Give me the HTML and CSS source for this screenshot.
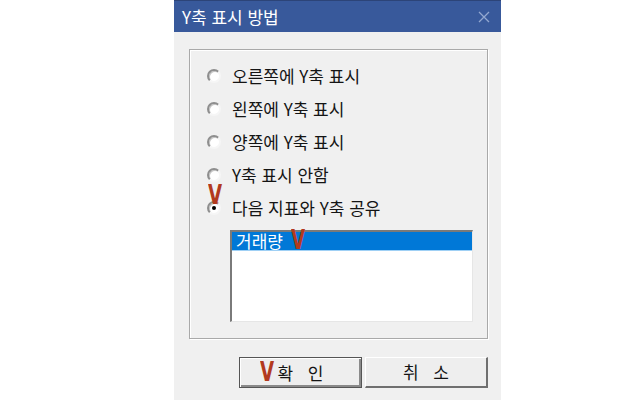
FILE: index.html
```html
<!DOCTYPE html>
<html lang="ko">
<head>
<meta charset="utf-8">
<link rel="stylesheet" href="styles.css">
</head>
<body>
<div class="dialog">
  <div class="titlebar">
    <span class="title">Y축 표시 방법</span>
    <svg class="close" width="12" height="12" viewBox="0 0 12 12"><path d="M1 1L11 11M11 1L1 11" stroke="#93a8d0" stroke-width="1.3" fill="none"/></svg>
  </div>
  <div class="content">
    <div class="group">
      <div class="options">
        <div class="opt"><span class="radio"></span><span class="lbl">오른쪽에 Y축 표시</span></div>
        <div class="opt"><span class="radio"></span><span class="lbl">왼쪽에 Y축 표시</span></div>
        <div class="opt"><span class="radio"></span><span class="lbl">양쪽에 Y축 표시</span></div>
        <div class="opt"><span class="radio"></span><span class="lbl">Y축 표시 안함</span></div>
        <div class="opt"><span class="radio checked"></span><span class="lbl">다음 지표와 Y축 공유</span></div>
      </div>
      <div class="listbox">
        <div class="item sel">거래량</div>
      </div>
    </div>
    <div class="buttons">
      <button class="btn default">확 인</button>
      <button class="btn">취 소</button>
    </div>
  </div>
  <span class="mark mark-radio">V</span>
  <span class="mark mark-list">V</span>
  <span class="mark mark-ok">V</span>
</div>
</body>
</html>
```
FILE: styles.css
```css
html, body {
  margin: 0;
  padding: 0;
  background: #ffffff;
}
body {
  font-family: "Noto Sans CJK KR", "Noto Sans", sans-serif;
  font-size: 17px;
  color: #141414;
}
.dialog {
  position: relative;
  margin-left: 174px;
  width: 327px;
  height: 400px;
  background: #f0f0f0;
  overflow: hidden;
}
.titlebar {
  height: 32px;
  background: #38599b;
  border-top: 1px solid #2c4478;
  box-sizing: border-box;
  display: flex;
  align-items: center;
  justify-content: space-between;
  padding: 0 11px 0 8px;
}
.title {
  color: #ffffff;
  font-size: 17px;
  line-height: 20px;
}
.close {
  display: block;
}
.content {
  display: flex;
  flex-direction: column;
}
.group {
  margin: 17px 13px 0 15px;
  height: 290px;
  box-sizing: border-box;
  border: 1px solid #a9a9a9;
  box-shadow: inset 1px 1px 0 #ffffff, 1px 1px 0 #ffffff;
}
.options {
  display: flex;
  flex-direction: column;
  padding: 9px 0 0 17px;
}
.opt {
  height: 33px;
  display: flex;
  align-items: center;
  gap: 11px;
}
.lbl {
  line-height: 20px;
}
.radio {
  position: relative;
  width: 14px;
  height: 14px;
  box-sizing: border-box;
  border-radius: 50%;
  background: #ffffff;
  border: 2px solid;
  border-color: #8e8e8e #f6f6f6 #f6f6f6 #8e8e8e;
  box-shadow: inset 1px 1px 0 #c4c4c4;
}
.radio.checked::after {
  content: "";
  position: absolute;
  left: 3px;
  top: 3px;
  width: 4px;
  height: 4px;
  border-radius: 50%;
  background: #000000;
}
.listbox {
  margin: 6px 0 0 40px;
  width: 243px;
  height: 92px;
  box-sizing: border-box;
  background: #ffffff;
  border-style: solid;
  border-width: 2px 1px 1px 2px;
  border-color: #7a7a7a #e6e6e6 #e6e6e6 #7a7a7a;
}
.item {
  height: 18px;
  line-height: 18px;
  padding-left: 4px;
}
.item.sel {
  background: #0078d7;
  color: #ffffff;
  border-bottom: 1px solid #9fd0f5;
}
.buttons {
  display: flex;
  justify-content: flex-end;
  gap: 3px;
  margin: 18px 13px 0 0;
}
.btn {
  width: 123px;
  height: 31px;
  box-sizing: border-box;
  font-family: "Noto Sans CJK KR", "Noto Sans", sans-serif;
  font-size: 17px;
  line-height: 20px;
  color: #141414;
  word-spacing: 10px;
  background: #eeeeee;
  padding: 0;
  border-style: solid;
  border-width: 1px 2px 2px 1px;
  border-color: #ffffff #6f6f6f #6f6f6f #ffffff;
}
.btn.default {
  border: 1px solid #555555;
  box-shadow: inset 1px 1px 0 #ffffff, inset -2px -2px 0 #8a8a8a;
}
.mark {
  position: absolute;
  font-family: "DejaVu Sans", sans-serif;
  font-weight: bold;
  color: #b23a1e;
  font-size: 26px;
  line-height: 26px;
  transform: scaleX(0.7);
  transform-origin: left top;
}
.mark-radio {
  left: 34px;
  top: 182px;
}
.mark-list {
  left: 117px;
  top: 227px;
}
.mark-ok {
  left: 86px;
  top: 359px;
}
```
